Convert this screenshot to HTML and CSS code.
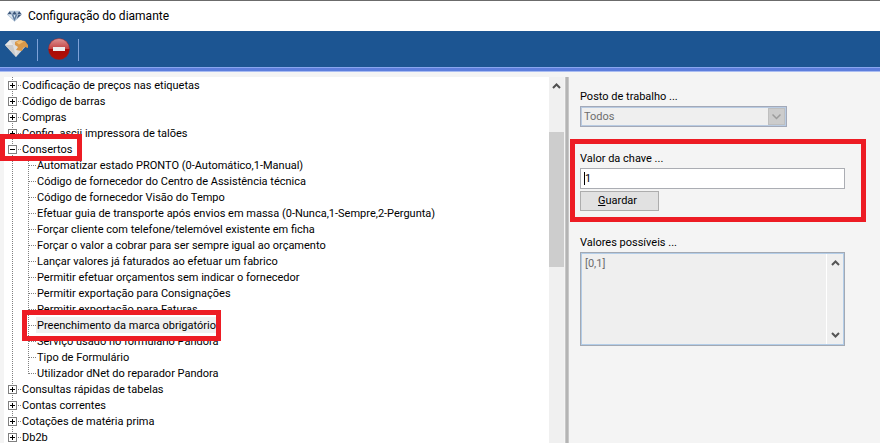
FILE: index.html
```html
<!DOCTYPE html>
<html lang="pt">
<head>
  <meta charset="UTF-8">
  <title>Configuração do diamante</title>
  <link rel="stylesheet" href="styles.css">
</head>
<body>
  <header class="titlebar">
    <svg class="app-icon" viewBox="0 0 16 12" aria-hidden="true">
      <path d="M3 0.5h10l3 4-8 7.5-8-7.5z" fill="#b4c5d8"/>
      <path d="M3 1l2 3H0.5zM8 1l2.500 3h-5zM13 1l2.500 3H11z" fill="#3a5478"/>
      <path d="M5 4.500l3 7 3-7z" fill="#5c7a9d"/>
      <path d="M1 4.500h3.500L6.500 9zM7 5h2L8 8z" fill="#dfe9f3"/>
      <path d="M12 5h3l-4.500 4z" fill="#3a5478"/>
    </svg>
    <h1>Configuração do diamante</h1>
  </header>

  <nav class="toolbar">
    <button class="tool" type="button" aria-label="Abrir">
      <svg width="24" height="24" viewBox="0 0 24 24" aria-hidden="true">
        <path d="M5 2h11l5 6-10 11L0 7z" fill="#d6d6d6"/>
        <path d="M5 2l3 5H0z" fill="#e6e6e6"/>
        <path d="M0 7h8l3 12z" fill="#cbcbcb"/>
        <path d="M8 7h6l-3 12z" fill="#dfdfdf"/>
        <path d="M10 4l4-2 6 1 3 4v3l-3-1-2 1-1 3-6-1 2-3-3-2z" fill="#d9994a"/>
        <path d="M11 4l5-1.500 3 1-5 3z" fill="#f0bd72"/>
      </svg>
    </button>
    <span class="tool-sep"></span>
    <button class="tool" type="button" aria-label="Remover">
      <svg width="24" height="24" viewBox="0 0 24 24" aria-hidden="true">
        <defs>
          <linearGradient id="red" x1="0" y1="0" x2="0" y2="1">
            <stop offset="0" stop-color="#dc9494"/>
            <stop offset="0.480" stop-color="#c44444"/>
            <stop offset="0.520" stop-color="#a80c08"/>
            <stop offset="1" stop-color="#b01208"/>
          </linearGradient>
        </defs>
        <circle cx="13" cy="11" r="10.500" fill="url(#red)" stroke="#9a1c1c" stroke-width="0.500"/>
        <rect x="7" y="9" width="12" height="4" fill="#ededed"/>
      </svg>
    </button>
    <span class="tool-sep"></span>
  </nav>

  <main class="workspace">
    <section class="tree-pane">
      <ul class="tree">
        <li><button class="toggle" type="button" aria-label="Expandir"></button><span class="label">Codificação de preços nas etiquetas</span></li>
        <li><button class="toggle" type="button" aria-label="Expandir"></button><span class="label">Código de barras</span></li>
        <li><button class="toggle" type="button" aria-label="Expandir"></button><span class="label">Compras</span></li>
        <li><button class="toggle" type="button" aria-label="Expandir"></button><span class="label">Config. ascii impressora de talões</span></li>
        <li class="open">
          <button class="toggle" type="button" aria-label="Fechar"></button><span class="label">Consertos</span>
          <span class="mark mark-group"></span>
          <ul class="children">
            <li><span class="label">Automatizar estado PRONTO (0-Automático,1-Manual)</span></li>
            <li><span class="label">Código de fornecedor do Centro de Assistência técnica</span></li>
            <li><span class="label">Código de fornecedor Visão do Tempo</span></li>
            <li><span class="label">Efetuar guia de transporte após envios em massa (0-Nunca,1-Sempre,2-Pergunta)</span></li>
            <li><span class="label">Forçar cliente com telefone/telemóvel existente em ficha</span></li>
            <li><span class="label">Forçar o valor a cobrar para ser sempre igual ao orçamento</span></li>
            <li><span class="label">Lançar valores já faturados ao efetuar um fabrico</span></li>
            <li><span class="label">Permitir efetuar orçamentos sem indicar o fornecedor</span></li>
            <li><span class="label">Permitir exportação para Consignações</span></li>
            <li><span class="label">Permitir exportação para Faturas</span></li>
            <li><span class="label selected">Preenchimento da marca obrigatório</span><span class="mark mark-item"></span></li>
            <li><span class="label">Serviço usado no formulário Pandora</span></li>
            <li><span class="label">Tipo de Formulário</span></li>
            <li><span class="label">Utilizador dNet do reparador Pandora</span></li>
          </ul>
        </li>
        <li><button class="toggle" type="button" aria-label="Expandir"></button><span class="label">Consultas rápidas de tabelas</span></li>
        <li><button class="toggle" type="button" aria-label="Expandir"></button><span class="label">Contas correntes</span></li>
        <li><button class="toggle" type="button" aria-label="Expandir"></button><span class="label">Cotações de matéria prima</span></li>
        <li><button class="toggle" type="button" aria-label="Expandir"></button><span class="label">Db2b</span></li>
      </ul>
      <div class="scrollbar">
        <svg class="arrow" width="9" height="6" viewBox="0 0 9 6" aria-hidden="true"><path d="M1 5l3.500-3.500L8 5" fill="none" stroke="#505050" stroke-width="2"/></svg>
        <div class="thumb"></div>
      </div>
    </section>
    <div class="splitter"></div>

    <form class="settings">
      <div class="field">
        <label for="posto">Posto de trabalho ...</label>
        <div class="combo">
          <select id="posto" disabled>
            <option>Todos</option>
          </select>
          <span class="combo-arrow">
            <svg width="9" height="6" viewBox="0 0 9 6" aria-hidden="true"><path d="M0.500 0.500l4 4 4-4" fill="none" stroke="#9c9c9c" stroke-width="1.500"/></svg>
          </span>
        </div>
      </div>

      <div class="field">
        <label for="chave">Valor da chave ...</label>
        <div class="entry">
          <input id="chave" type="text" value="1">
          <span class="caret"></span>
        </div>
        <button class="save" type="button"><u>G</u>uardar</button>
        <span class="mark mark-key"></span>
      </div>

      <div class="field">
        <label for="valores">Valores possíveis ...</label>
        <div class="memo">
          <textarea id="valores" disabled>[0,1]</textarea>
          <div class="memo-scroll">
            <svg width="9" height="6" viewBox="0 0 9 6" aria-hidden="true"><path d="M1 5l3.500-3.500L8 5" fill="none" stroke="#555" stroke-width="2"/></svg>
            <svg width="9" height="6" viewBox="0 0 9 6" aria-hidden="true"><path d="M1 1l3.500 3.500L8 1" fill="none" stroke="#555" stroke-width="2"/></svg>
          </div>
        </div>
      </div>
    </form>
  </main>
</body>
</html>
```

FILE: styles.css
```css
* {
  box-sizing: border-box;
}
body {
  margin: 0;
  height: 100vh;
  overflow: hidden;
  display: flex;
  flex-direction: column;
  background: #f4f4f4;
  color: #000;
  font-family: Roboto, Tahoma, sans-serif;
  font-size: 11px;
  line-height: 18px;
}
button, input, select, textarea {
  font: inherit;
  color: inherit;
  margin: 0;
  border-radius: 0;
}

/* title and toolbar */
.titlebar {
  flex: none;
  display: flex;
  align-items: center;
  gap: 6px;
  height: 31px;
  padding-left: 7px;
  background: #fff;
  border-top: 1px solid #6b6b6b;
}
.app-icon {
  width: 15px;
  height: 12px;
}
.titlebar h1 {
  margin: 0;
  font-size: 12px;
  font-weight: normal;
}
.toolbar {
  flex: none;
  display: flex;
  align-items: center;
  gap: 8px;
  height: 41px;
  padding: 0 5px 4px;
  background: linear-gradient(#89a6f0 1px, #5d7edc 1px, #5d7edc 4px, #a9bcf2 4px) bottom / 100% 5px no-repeat #1c5592;
}
.tool {
  display: flex;
  padding: 0;
  border: 0;
  background: none;
}
.tool-sep {
  width: 1px;
  height: 22px;
  background: #7ea2d8;
}

/* tree */
.workspace {
  flex: 1;
  min-height: 0;
  display: flex;
}
.tree-pane {
  flex: 1;
  min-width: 0;
  display: flex;
  margin-top: 5px;
  padding-left: 4px;
}
.tree {
  flex: 1;
  min-width: 0;
  margin: 0;
  padding: 0 0 0 4px;
  list-style: none;
  white-space: nowrap;
  line-height: 16px;
  background: repeating-linear-gradient(#808080 0 1px, transparent 1px 2px) 8px 0 / 1px 100% no-repeat #fff;
}
.tree li {
  position: relative;
  min-height: 16px;
}
.toggle {
  position: relative;
  z-index: 1;
  float: left;
  width: 9px;
  height: 9px;
  margin: 4px 4px 3px 0;
  padding: 0;
  border: 1px solid #808080;
  background:
    linear-gradient(#000, #000) center / 5px 1px no-repeat,
    linear-gradient(#000, #000) center / 1px 5px no-repeat,
    #fff;
}
.open > .toggle {
  background: linear-gradient(#000, #000) center / 5px 1px no-repeat #fff;
}
.tree > li::before,
.children > li::before {
  content: "";
  position: absolute;
  top: 8px;
  left: 9px;
  width: 4px;
  height: 1px;
  background: repeating-linear-gradient(90deg, transparent 0 1px, #808080 1px 2px);
}
.label {
  display: inline-block;
  height: 16px;
  padding: 0 1px;
  line-height: 18px;
  vertical-align: top;
}
.selected {
  background: #f0f0f0;
}
.children {
  margin: 0;
  padding: 0 0 0 20px;
  list-style: none;
  background: repeating-linear-gradient(#808080 0 1px, transparent 1px 2px) 20px 0 / 1px calc(100% - 7px) no-repeat;
}
.children > li {
  padding-left: 8px;
}
.children > li::before {
  left: 0;
  width: 8px;
}

.scrollbar {
  width: 15px;
  background: #f0f0f0;
}
.arrow {
  display: block;
  margin: 6px auto 43px;
}
.thumb {
  height: 135px;
  background: #cdcdcd;
}
.splitter {
  flex: none;
  width: 4px;
  margin: 5px 0 0 1px;
  background: #b4b4b4;
  border: 1px solid #c8c8c8;
  border-width: 0 1px;
}

/* settings form */
.settings {
  flex: none;
  width: 311px;
  padding: 16px 35px 0 11px;
}
.field {
  position: relative;
  margin-bottom: 23px;
}
.field label {
  display: block;
  height: 18px;
}
.combo {
  position: relative;
  width: 207px;
}
.combo select {
  display: block;
  appearance: none;
  width: 100%;
  height: 21px;
  padding: 0 20px 0 3px;
  border: 1px solid #a3a9b8;
  box-shadow: inset 0 0 0 1px #b9cbe2;
  background: #efefef;
  color: #6d6d6d;
  opacity: 1;
}
.combo-arrow {
  position: absolute;
  top: 2px;
  right: 2px;
  width: 17px;
  height: 17px;
  display: flex;
  align-items: center;
  justify-content: center;
  background: #ccc;
  border: 1px solid #bfbfbf;
}
.entry {
  position: relative;
}
.entry input {
  display: block;
  width: 100%;
  height: 21px;
  padding: 0 4px;
  border: 1px solid #abadb3;
  background: #fff;
}
.caret {
  position: absolute;
  top: 4px;
  left: 4px;
  width: 1px;
  height: 13px;
  background: #000;
}
.save {
  display: block;
  width: 79px;
  height: 20px;
  margin-top: 2px;
  padding: 0 4px 0 0;
  border: 1px solid #adadad;
  background: #e1e1e1;
}
.memo {
  position: relative;
}
.memo textarea {
  display: block;
  width: 100%;
  height: 94px;
  padding: 2px 20px 2px 4px;
  border: 1px solid #a3a9b3;
  box-shadow: inset 0 0 0 1px #b3cde8;
  background: #efefef;
  color: #6d6d6d;
  resize: none;
}
.memo-scroll {
  position: absolute;
  top: 2px;
  right: 2px;
  bottom: 2px;
  width: 17px;
  padding: 6px 0;
  display: flex;
  flex-direction: column;
  align-items: center;
  justify-content: space-between;
  border-left: 1px solid #fff;
}

/* red highlight frames */
.mark {
  position: absolute;
  z-index: 2;
  border: 5px solid #ed1c24;
  pointer-events: none;
}
.mark-group {
  top: -7px;
  left: -8px;
  width: 82px;
  height: 27px;
}
.mark-item {
  top: -7px;
  left: -6px;
  width: 199px;
  height: 31px;
}
.mark-key {
  top: -11px;
  right: -21px;
  bottom: -11px;
  left: -10px;
}
```
